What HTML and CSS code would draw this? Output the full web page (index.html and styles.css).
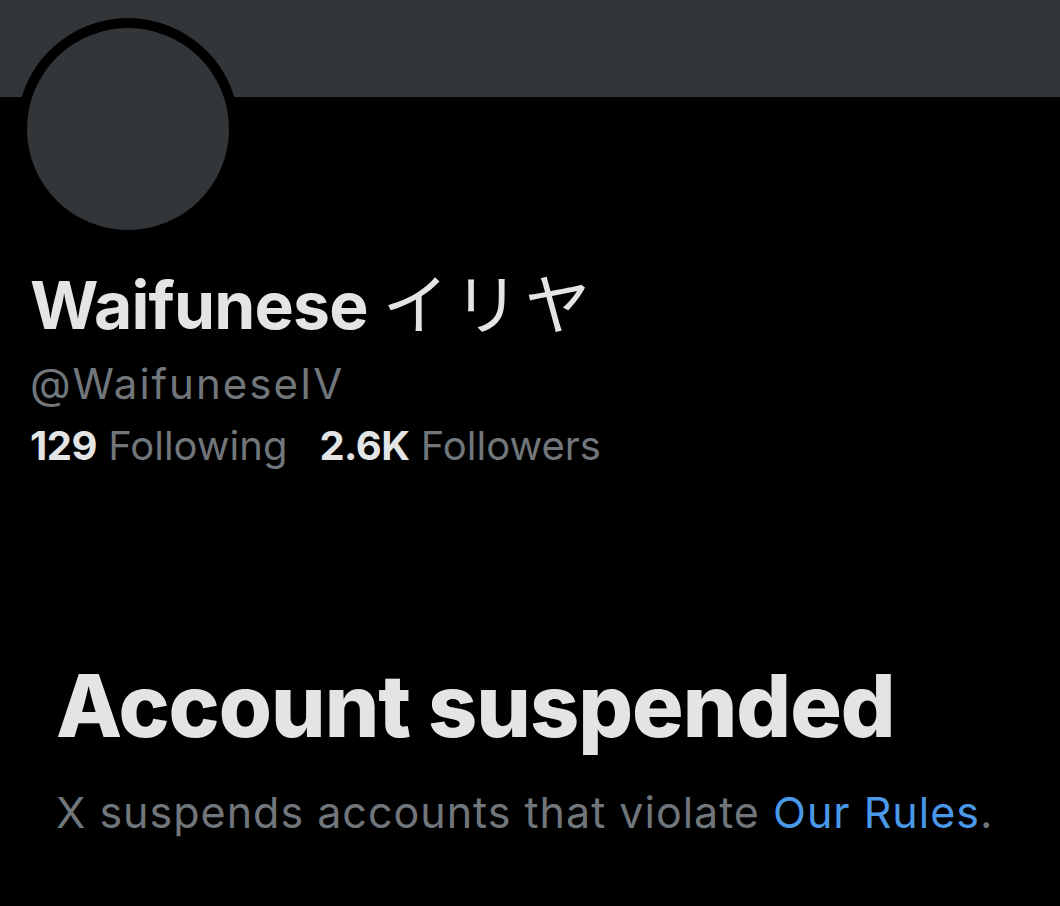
FILE: index.html
```html
<!DOCTYPE html>
<html lang="en">
<head>
<meta charset="utf-8">
<link rel="stylesheet" href="styles.css">
</head>
<body>
<div class="page">
  <div class="banner"></div>
  <div class="profile">
    <div class="avatar"><div class="avatar-inner"></div></div>
    <h1 class="name">Waifunese <span class="jp">イリヤ</span></h1>
    <div class="handle">@WaifuneseIV</div>
    <div class="stats">
      <span class="stat"><b>129</b> Following</span>
      <span class="stat"><b>2.6K</b> Followers</span>
    </div>
  </div>
  <div class="suspended">
    <h2 class="title">Account suspended</h2>
    <p class="desc">X suspends accounts that violate <a class="link" href="#">Our Rules</a>.</p>
  </div>
</div>
</body>
</html>
```

FILE: styles.css
```css
html, body {
  margin: 0;
  padding: 0;
  background: #000;
}
.page {
  width: 1060px;
  height: 906px;
  background: #000;
  overflow: hidden;
  font-family: Inter, "Noto Sans CJK JP", sans-serif;
  color: #e3e4e5;
}
.banner {
  height: 97px;
  background: #333639;
}
.profile {
  padding-left: 30px;
}
.avatar {
  width: 222px;
  height: 222px;
  margin-top: -79px;
  margin-left: -13px;
  border-radius: 50%;
  background: #000;
  display: flex;
  align-items: center;
  justify-content: center;
}
.avatar-inner {
  width: 202px;
  height: 202px;
  border-radius: 50%;
  background: #333639;
}
.name {
  margin: 20px 0 0 0;
  font-size: 66px;
  font-weight: 700;
  line-height: 80px;
  letter-spacing: -0.8px;
}
.jp {
  font-family: "Noto Sans CJK JP", sans-serif;
  font-weight: 400;
  letter-spacing: 5px;
}
.handle {
  margin-top: 14px;
  font-size: 42px;
  line-height: 50px;
  letter-spacing: 2px;
  color: #71767b;
}
.stats {
  display: flex;
  gap: 32px;
  margin-top: 13px;
  font-size: 40px;
  line-height: 48px;
  color: #71767b;
}
.stats b {
  color: #e3e4e5;
  font-weight: 700;
  letter-spacing: -0.5px;
}
.suspended {
  padding-left: 56px;
  margin-top: 184px;
}
.title {
  margin: 0;
  font-size: 86px;
  font-weight: 800;
  line-height: 104px;
  letter-spacing: -1px;
}
.desc {
  margin: 28px 0 0 0;
  font-size: 43px;
  line-height: 52px;
  letter-spacing: 1px;
  color: #71767b;
}
.link {
  color: #4a99e9;
  text-decoration: none;
}
```
